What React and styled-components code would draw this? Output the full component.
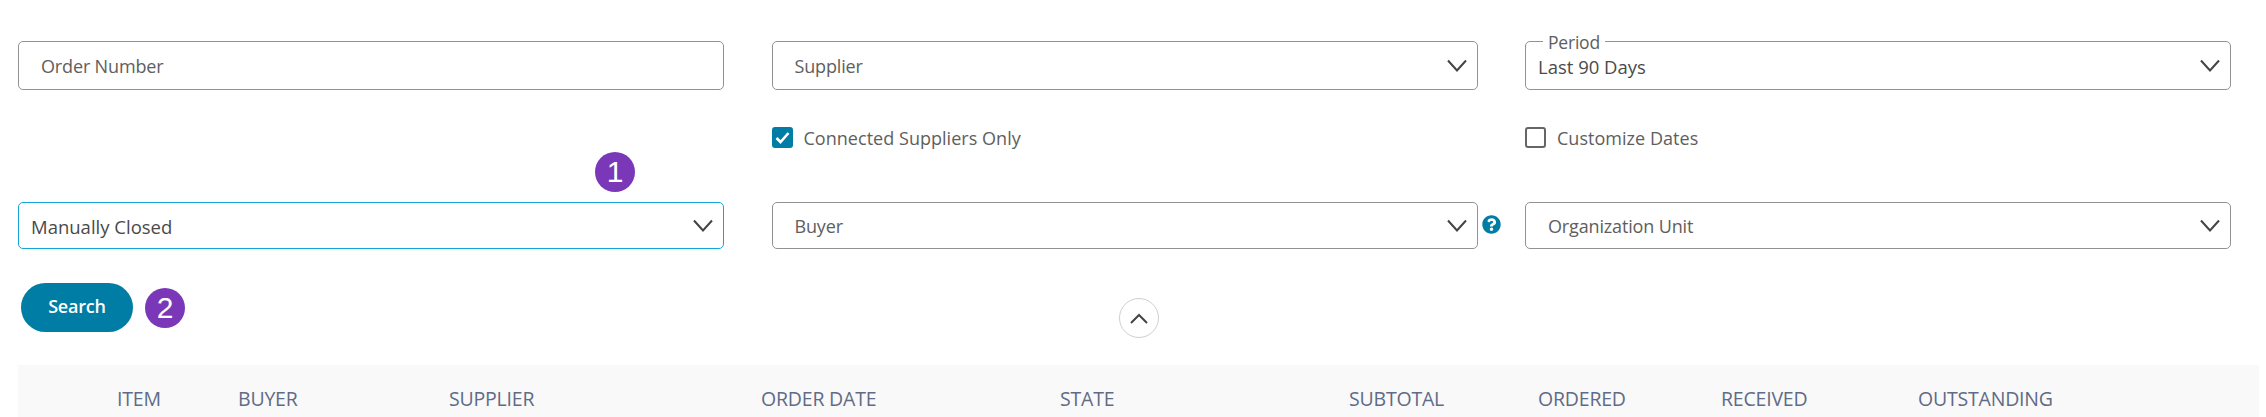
import React from "react";
import styled, { createGlobalStyle } from "styled-components";
import { FaQuestionCircle } from "react-icons/fa";

const Global = createGlobalStyle`
  html, body { margin: 0; padding: 0; background: #fff; overflow: hidden; }
  body { font-family: "Open Sans", "Noto Sans", sans-serif; color: #555; }
`;

const Page = styled.div`
  width: 2266px;
  height: 417px;
  box-sizing: border-box;
  padding: 41px 7px 0 18px;
  display: flex;
  flex-direction: column;
`;

const FilterGrid = styled.div`
  display: grid;
  grid-template-columns: 706px 706px 706px;
  grid-template-rows: 49px 112px 47px;
  column-gap: 47.5px;
`;

const Field = styled.div`
  position: relative;
  box-sizing: border-box;
  border: 1px solid ${(p) => (p.$active ? "#12a5d8" : "#929292")};
  border-radius: 5px;
  background: #fff;
  display: flex;
  align-items: center;
  justify-content: space-between;
  padding: 0 10px 0 ${(p) => (p.$filled ? 12 : 22)}px;
`;

const FieldText = styled.span`
  font-size: ${(p) => (p.$filled ? "18.5px" : "18px")};
  letter-spacing: ${(p) => (p.$filled ? "0" : "-0.15px")};
  color: ${(p) => (p.$filled ? "#4a4a4a" : "#5e5e5e")};
  white-space: nowrap;
  padding-top: 1px;
`;

const Legend = styled.span`
  position: absolute;
  top: -11px;
  left: 17px;
  padding: 0 5px;
  background: #fff;
  font-size: 17.5px;
  line-height: 22px;
  letter-spacing: -0.2px;
  color: #5e5e5e;
`;

const CheckCell = styled.label`
  display: flex;
  align-items: center;
  align-self: start;
  gap: 11px;
  margin-top: 37px;
  height: 21px;
`;

const Box = styled.span`
  box-sizing: border-box;
  width: 21px;
  height: 21px;
  border-radius: 3px;
  border: 2px solid ${(p) => (p.$checked ? "#007da5" : "#666")};
  background: ${(p) => (p.$checked ? "#007da5" : "#fff")};
  display: flex;
  align-items: center;
  justify-content: center;
`;

const CheckLabel = styled.span`
  font-size: 18px;
  letter-spacing: 0.03px;
  color: #5e5e5e;
`;

const Marker = styled.span`
  box-sizing: border-box;
  width: 40px;
  height: 40px;
  border-radius: 50%;
  background: #7a38b8;
  color: #fff;
  font-family: "Liberation Sans", sans-serif;
  font-size: 30px;
  display: flex;
  align-items: center;
  justify-content: center;
  flex: none;
`;

const FloatingMarker = styled(Marker)`
  position: absolute;
  left: 576px;
  top: -51px;
`;

const HelpIcon = styled.span`
  position: absolute;
  left: calc(100% + 5px);
  top: 12px;
  display: flex;
  color: #007da5;
  font-size: 19px;
`;

const ActionRow = styled.div`
  display: grid;
  grid-template-columns: 1fr auto 1fr;
  margin-top: 34px;
  height: 82px;
`;

const ActionLeft = styled.div`
  display: flex;
  align-items: flex-start;
  gap: 12px;
  padding-left: 3px;
`;

const SearchButton = styled.button`
  width: 112px;
  height: 49px;
  border: none;
  border-radius: 25px;
  background: #007da5;
  color: #fff;
  font-family: inherit;
  font-size: 18px;
  font-weight: 600;
  letter-spacing: -0.2px;
  padding: 0 0 3px;
`;

const SecondMarker = styled(Marker)`
  margin-top: 5px;
`;

const CollapseButton = styled.button`
  box-sizing: border-box;
  width: 40px;
  height: 40px;
  margin-top: 15px;
  border: 1px solid #cfcfcf;
  border-radius: 50%;
  background: #fff;
  display: flex;
  align-items: center;
  justify-content: center;
  padding: 0;
`;

const TableHead = styled.div`
  height: 52px;
  background: #f9f9f9;
  display: grid;
  grid-template-columns: 99px 121px 211px 312px 299px 289px 189px 183px 197px 1fr;
  align-items: center;
  padding-top: 15px;
  box-sizing: border-box;
`;

const HeadCell = styled.span`
  font-size: 19.5px;
  letter-spacing: -0.2px;
  color: #5f6b87;
  white-space: nowrap;
`;

const Chevron = ({ up }) => (
  <svg width="20" height="13" viewBox="0 0 20 13" fill="none" aria-hidden="true">
    <polyline
      points={up ? "2,11 10,3 18,11" : "1,1.5 10,11.5 19,1.5"}
      stroke="#444"
      strokeWidth="2"
    />
  </svg>
);

const Tick = () => (
  <svg width="15" height="13" viewBox="0 0 15 13" fill="none" aria-hidden="true">
    <polyline points="1.5,7 5.5,11 13.5,2" stroke="#fff" strokeWidth="2.6" />
  </svg>
);

const columns = ["", "ITEM", "BUYER", "SUPPLIER", "ORDER DATE", "STATE", "SUBTOTAL", "ORDERED", "RECEIVED", "OUTSTANDING"];

export default function App() {
  return (
    <>
      <Global />
      <Page>
        <FilterGrid>
          <Field>
            <FieldText>Order Number</FieldText>
          </Field>
          <Field>
            <FieldText>Supplier</FieldText>
            <Chevron />
          </Field>
          <Field $filled>
            <Legend>Period</Legend>
            <FieldText $filled>Last 90 Days</FieldText>
            <Chevron />
          </Field>

          <span />
          <CheckCell>
            <Box $checked><Tick /></Box>
            <CheckLabel>Connected Suppliers Only</CheckLabel>
          </CheckCell>
          <CheckCell>
            <Box />
            <CheckLabel>Customize Dates</CheckLabel>
          </CheckCell>

          <Field $active $filled>
            <FloatingMarker>1</FloatingMarker>
            <FieldText $filled>Manually Closed</FieldText>
            <Chevron />
          </Field>
          <Field>
            <FieldText>Buyer</FieldText>
            <Chevron />
            <HelpIcon><FaQuestionCircle /></HelpIcon>
          </Field>
          <Field>
            <FieldText>Organization Unit</FieldText>
            <Chevron />
          </Field>
        </FilterGrid>

        <ActionRow>
          <ActionLeft>
            <SearchButton>Search</SearchButton>
            <SecondMarker>2</SecondMarker>
          </ActionLeft>
          <CollapseButton><Chevron up /></CollapseButton>
          <span />
        </ActionRow>

        <TableHead>
          {columns.map((c, i) => (
            <HeadCell key={i}>{c}</HeadCell>
          ))}
        </TableHead>
      </Page>
    </>
  );
}
